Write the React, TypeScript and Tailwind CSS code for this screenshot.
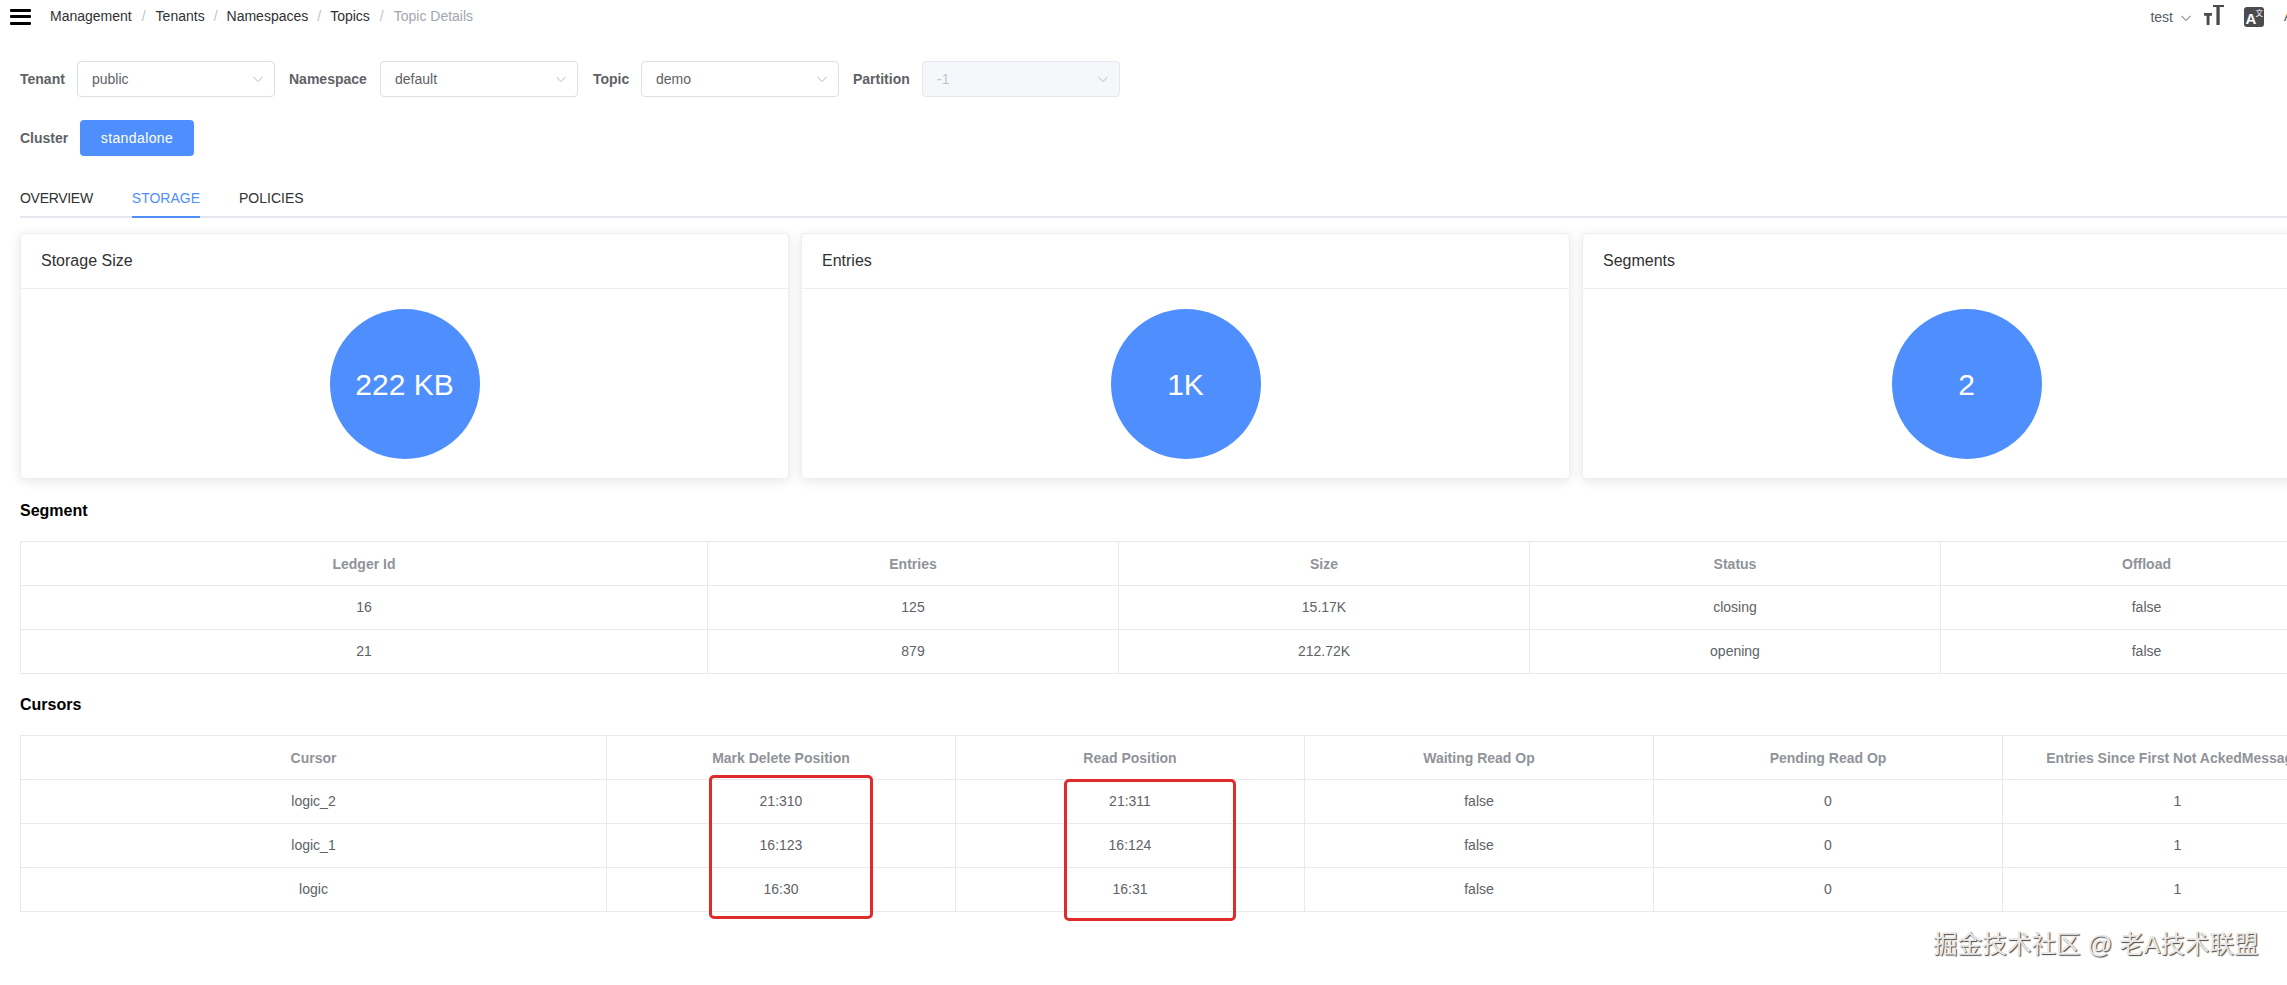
import React from "react";

const Chevron = () => (
  <svg width="12" height="12" viewBox="0 0 12 12" fill="none" stroke="#b8bcc4" strokeWidth="1">
    <path d="M1.5 3.8 L6 8.6 L10.5 3.8" />
  </svg>
);

const Select = ({ value, disabled }: { value: string; disabled?: boolean }) => (
  <div
    className={`flex items-center justify-between w-[198px] h-[36px] rounded border border-[#dcdfe6] pl-[14px] pr-[10px] text-[14px] ${
      disabled ? "bg-[#f5f7fa] text-[#c0c4cc] border-[#e4e7ed]" : "bg-white text-[#606266]"
    }`}
  >
    <span>{value}</span>
    <Chevron />
  </div>
);

const Card = ({ title, value }: { title: string; value: string }) => (
  <div className="w-[769px] h-[246px] shrink-0 rounded border border-[#ebeef5] bg-white shadow-[0_2px_12px_0_rgba(0,0,0,0.1)]">
    <div className="h-[55px] flex items-center px-5 border-b border-[#ebeef5] text-[16px] text-[#303133]">{title}</div>
    <div className="flex justify-center pt-5">
      <div className="w-[150px] h-[150px] rounded-full bg-[#4f8ffd] flex items-center justify-center text-white text-[30px]">
        {value}
      </div>
    </div>
  </div>
);

const DataTable = ({ widths, head, rows }: { widths: number[]; head: string[]; rows: string[][] }) => (
  <table className="table-fixed w-[2332px] border-collapse border border-[#e6e9ef] text-center">
    <colgroup>
      {widths.map((w, i) => (
        <col key={i} style={{ width: w }} />
      ))}
    </colgroup>
    <thead>
      <tr className="h-[44px]">
        {head.map((h) => (
          <th key={h} className="border border-[#e6e9ef] pt-[2px] font-bold text-[14px] text-[#909399] whitespace-nowrap">
            {h}
          </th>
        ))}
      </tr>
    </thead>
    <tbody>
      {rows.map((r, i) => (
        <tr key={i} className="h-[44px]">
          {r.map((c, j) => (
            <td key={j} className="border border-[#e6e9ef] text-[14px] text-[#606266]">
              {c}
            </td>
          ))}
        </tr>
      ))}
    </tbody>
  </table>
);

export default function App() {
  return (
    <div className="relative w-[2287px] h-[985px] overflow-hidden bg-white font-['Liberation_Sans','Noto_Sans_CJK_SC',sans-serif]">
      <header className="flex items-center h-[33px] pl-[10px] pr-0">
        <div className="flex flex-col justify-between w-[21px] h-[16px] mr-[19px]">
          <span className="block h-[3px] bg-black rounded-[1px]" />
          <span className="block h-[3px] bg-black rounded-[1px]" />
          <span className="block h-[3px] bg-black rounded-[1px]" />
        </div>
        <nav className="flex items-center text-[14px] text-[#303133]">
          <span>Management</span>
          <span className="mx-[10px] text-[#c0c4cc]">/</span>
          <span>Tenants</span>
          <span className="mx-[9px] text-[#c0c4cc]">/</span>
          <span>Namespaces</span>
          <span className="mx-[9px] text-[#c0c4cc]">/</span>
          <span>Topics</span>
          <span className="mx-[10px] text-[#c0c4cc]">/</span>
          <span className="text-[#a3a6ad]">Topic Details</span>
        </nav>
        <div className="ml-auto flex items-center mr-[-17px]">
          <span className="mt-[2px] text-[14px] text-[#5a5e66]">test</span>
          <svg className="mt-[2px] ml-[7px]" width="12" height="12" viewBox="0 0 12 12" fill="none" stroke="#5a5e66" strokeWidth="1">
            <path d="M1.5 3.8 L6 8.6 L10.5 3.8" />
          </svg>
          <svg className="ml-[12px] mt-[-3px]" width="20" height="20" viewBox="0 0 20 20" fill="#4b4b4f">
            <path d="M0 8h8v2.800H5.500V20H2.600V10.800H0z" />
            <path d="M9 0h11v2h-4.300v18h-3.300V2H9z" />
          </svg>
          <svg className="ml-[20px]" width="20" height="20" viewBox="0 0 20 20">
            <rect width="20" height="20" rx="3" fill="#4b4b4f" />
            <text x="1.500" y="17" fontSize="15" fontWeight="700" fill="#fff" fontFamily="Liberation Sans">A</text>
            <text x="11.500" y="8.500" fontSize="7.500" fill="#fff" fontFamily="Noto Sans CJK SC">文</text>
          </svg>
          <span className="ml-[20px] w-[20px] text-[13px] text-[#4b4b4f]">A</span>
        </div>
      </header>

      <main className="px-5">
        <div className="flex items-center h-[36px] mt-[28px] text-[14px]">
          <label className="font-bold text-[#606266] w-[57px]">Tenant</label>
          <Select value="public" />
          <label className="font-bold text-[#606266] ml-[14px] w-[91px]">Namespace</label>
          <Select value="default" />
          <label className="font-bold text-[#606266] ml-[15px] w-[48px]">Topic</label>
          <Select value="demo" />
          <label className="font-bold text-[#606266] ml-[14px] w-[69px]">Partition</label>
          <Select value="-1" disabled />
        </div>

        <div className="flex items-center h-[36px] mt-[23px] text-[14px]">
          <label className="font-bold text-[#606266] w-[60px]">Cluster</label>
          <button className="w-[114px] h-[36px] rounded bg-[#4f8ffd] text-white text-[14px] tracking-[0.4px]">standalone</button>
        </div>

        <div className="flex items-start w-[2332px] h-[40px] mt-[22px] border-b-2 border-[#e4e7ed] text-[14px] text-[#303133]">
          <div className="h-[40px] leading-[40px] mr-[39px] tracking-[-0.3px]">OVERVIEW</div>
          <div className="h-[40px] leading-[40px] mr-[39px] text-[#4f8ffd] border-b-2 border-[#4f8ffd]">STORAGE</div>
          <div className="h-[40px] leading-[40px]">POLICIES</div>
        </div>

        <div className="flex gap-[12px] mt-[15px]">
          <Card title="Storage Size" value="222 KB" />
          <Card title="Entries" value="1K" />
          <Card title="Segments" value="2" />
        </div>

        <h2 className="mt-[22px] h-[20px] leading-[20px] text-[16px] font-bold text-black">Segment</h2>
        <div className="mt-[20px]">
          <DataTable
            widths={[687, 411, 411, 411, 412]}
            head={["Ledger Id", "Entries", "Size", "Status", "Offload"]}
            rows={[
              ["16", "125", "15.17K", "closing", "false"],
              ["21", "879", "212.72K", "opening", "false"],
            ]}
          />
        </div>

        <h2 className="mt-[21px] h-[20px] leading-[20px] text-[16px] font-bold text-black">Cursors</h2>
        <div className="mt-[20px]">
          <DataTable
            widths={[586, 349, 349, 349, 349, 350]}
            head={["Cursor", "Mark Delete Position", "Read Position", "Waiting Read Op", "Pending Read Op", "Entries Since First Not AckedMessages"]}
            rows={[
              ["logic_2", "21:310", "21:311", "false", "0", "1"],
              ["logic_1", "16:123", "16:124", "false", "0", "1"],
              ["logic", "16:30", "16:31", "false", "0", "1"],
            ]}
          />
        </div>
      </main>

      <div className="absolute left-[709px] top-[775px] w-[164px] h-[144px] rounded-[5px] border-[3px] border-[#e02b2b]" />
      <div className="absolute left-[1064px] top-[779px] w-[172px] h-[142px] rounded-[5px] border-[3px] border-[#e02b2b]" />
      <div className="absolute left-[1933px] top-[930px] text-[24.6px] leading-[30px] whitespace-nowrap text-[#e8e8e8] [text-shadow:1px_1px_1px_#444]">
        掘金技术社区 @ 老A技术联盟
      </div>
    </div>
  );
}
